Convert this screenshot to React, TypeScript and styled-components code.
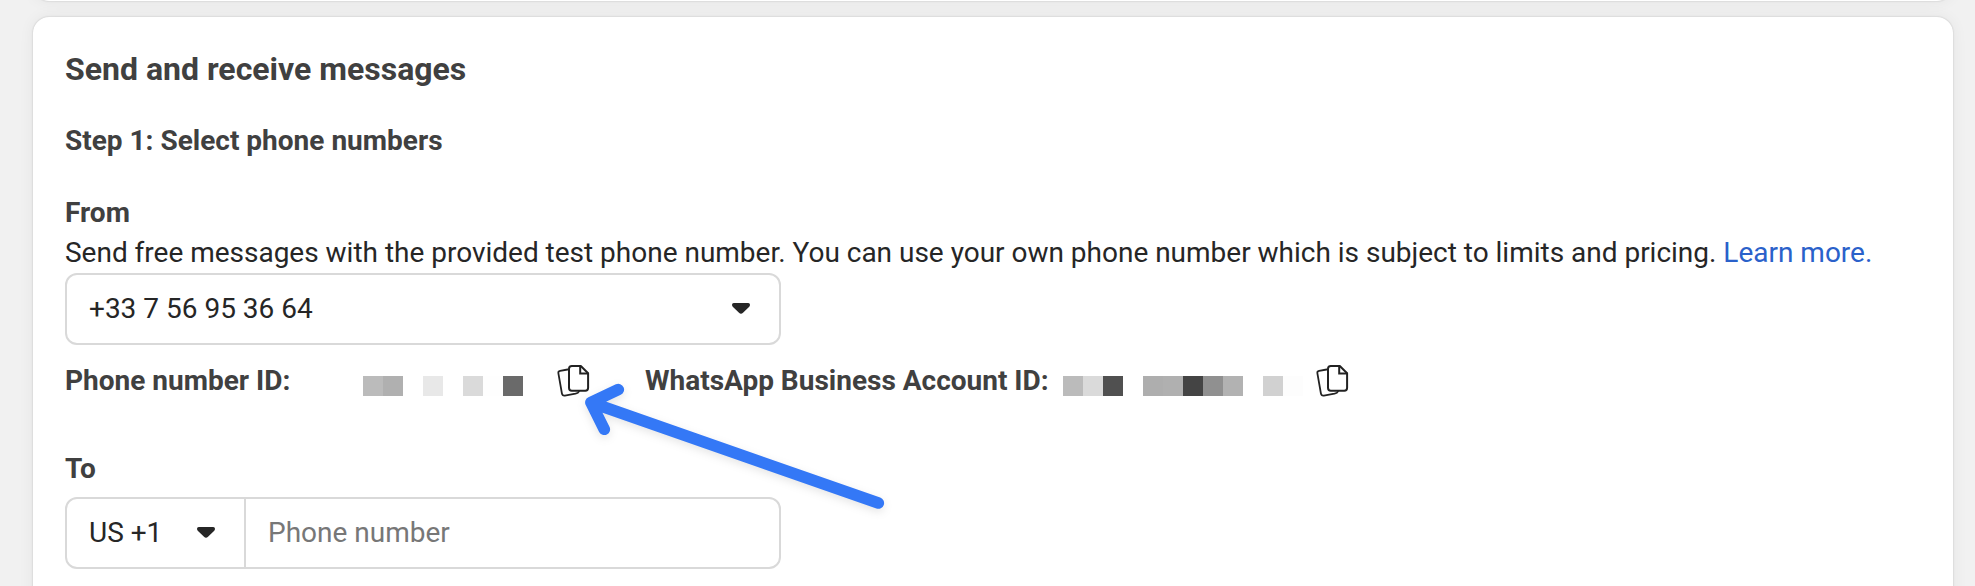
import React from "react";
import styled, { createGlobalStyle } from "styled-components";

const GlobalStyle = createGlobalStyle`
  * { box-sizing: border-box; }
  html, body { margin: 0; padding: 0; background: #f1f1f1; }
  body { font-family: Roboto, "Liberation Sans", sans-serif; overflow: hidden; }
`;

const Page = styled.main`
  display: flex;
  flex-direction: column;
  gap: 16px;
  width: 1975px;
  height: 586px;
  padding: 0 22px 0 33px;
  overflow: hidden;
  position: relative;
`;

const Card = styled.section`
  flex: none;
  background: #fff;
  border-radius: 16px;
  box-shadow: 0 0 2px rgba(0, 0, 0, 0.2), 0 0 16px rgba(0, 0, 0, 0.06);
`;

const PreviousCard = styled(Card)`
  height: 40px;
  margin-top: -39px;
`;

const MessagesCard = styled(Card)`
  display: flex;
  flex-direction: column;
  align-items: flex-start;
  height: 640px;
  padding: 32px;
`;

const Title = styled.h2`
  margin: 0 0 32px;
  font-size: 32px;
  line-height: 40px;
  font-weight: 700;
  color: #404040;
  white-space: nowrap;
`;

const Label = styled.h3<{ $after?: number }>`
  margin: 0 0 ${(p) => p.$after ?? 0}px;
  font-size: 28px;
  line-height: 40px;
  font-weight: 700;
  color: #404040;
  white-space: nowrap;
`;

const Description = styled.p`
  margin: 0;
  font-size: 28px;
  line-height: 40px;
  letter-spacing: -0.01px;
  color: #262626;
  white-space: nowrap;
`;

const Link = styled.a`
  color: #2a61ca;
  text-decoration: none;
`;

const Field = styled.div`
  display: flex;
  width: 716px;
  height: 72px;
  border: 2px solid #d9d9d9;
  border-radius: 12px;
  background: #fff;
  font-size: 28px;
  line-height: 40px;
  color: #262626;
`;

const Select = styled.div<{ $width?: number }>`
  display: flex;
  align-items: center;
  justify-content: space-between;
  width: ${(p) => (p.$width ? `${p.$width}px` : "100%")};
  padding: 0 29px 0 22px;
`;

const PhoneInput = styled.input`
  flex: 1;
  min-width: 0;
  padding: 0 22px;
  border: 0;
  border-left: 2px solid #d9d9d9;
  background: transparent;
  font: inherit;
  outline: none;
  &::placeholder { color: #777; opacity: 1; }
`;

const IdRow = styled.div`
  display: flex;
  align-items: flex-start;
  height: 40px;
  margin: 16px 0 48px;
`;

const IdItem = styled.div<{ $width: number }>`
  display: flex;
  justify-content: space-between;
  width: ${(p) => p.$width}px;
`;

const IdValue = styled.div`
  display: flex;
`;

const Mosaic = styled.div<{ $gap: number }>`
  display: flex;
  margin: 15px ${(p) => p.$gap}px 0 0;
`;

const Tile = styled.span<{ $color: string }>`
  width: 20px;
  height: 20px;
  background: ${(p) => p.$color};
`;

const CopyButton = styled.button`
  width: 34px;
  height: 34px;
  margin-top: 3px;
  padding: 0;
  border: 0;
  background: none;
  svg { display: block; }
`;

const Spacer = styled.div`
  width: 54px;
`;

const Pointer = styled.svg`
  position: absolute;
  left: 570px;
  top: 370px;
  filter: drop-shadow(0 3px 4px rgba(0, 0, 0, 0.1));
`;

const Caret = () => (
  <svg width="18" height="12" viewBox="0 0 18 12">
    <path d="M1.8 0H16.2Q18 0 18 1.8Q18 3 17 4L11 9.8Q9 11.8 7 9.8L1 4Q0 3 0 1.8Q0 0 1.8 0Z" fill="#262626" />
  </svg>
);

const Copy = () => (
  <CopyButton aria-label="Copy">
    <svg width="34" height="34" viewBox="0 0 34 34" fill="none" stroke="#222" strokeWidth="2" strokeLinejoin="round" strokeLinecap="round">
      <path d="M10.6 5.5L3.1 6.8Q1 7.2 1.4 9.3L4.9 29.4Q5.4 32 7.9 31.6L18.5 29.7Q21.3 29.1 22 27.5" strokeWidth="1.8" />
      <path d="M14.5 2H23.8L31.1 9.2V23.8Q31.1 26.7 28.3 26.7H14.8Q12 26.7 12 23.8V4.8Q12 2 14.8 2Z" />
      <path d="M23.2 2.4V9.6H30.8" strokeLinejoin="miter" />
    </svg>
  </CopyButton>
);

const phoneTiles = ["#bbb", "#b0b0b0", "#fff", "#e8e8e8", "#fff", "#dadada", "#fefefe", "#6a6a6a"];
const accountTiles = ["#bbb", "#dadada", "#505050", "#fff", "#aeaeae", "#b0b0b0", "#444", "#909090", "#b2b2b2", "#fff", "#d1d1d1", "#fdfdfd"];

const Redacted = ({ tiles, gap }: { tiles: string[]; gap: number }) => (
  <Mosaic $gap={gap}>
    {tiles.map((color, i) => (
      <Tile key={i} $color={color} />
    ))}
  </Mosaic>
);

export default function App() {
  return (
    <>
      <GlobalStyle />
      <Page>
        <PreviousCard />
        <MessagesCard>
          <Title>Send and receive messages</Title>
          <Label $after={32}>Step 1: Select phone numbers</Label>
          <Label>From</Label>
          <Description>
            Send free messages with the provided test phone number. You can use your own phone number which is subject to limits and pricing. <Link>Learn more.</Link>
          </Description>
          <Field>
            <Select>
              <span>+33 7 56 95 36 64</span>
              <Caret />
            </Select>
          </Field>
          <IdRow>
            <IdItem $width={526}>
              <Label>Phone number ID:</Label>
              <IdValue>
                <Redacted tiles={phoneTiles} gap={34} />
                <Copy />
              </IdValue>
            </IdItem>
            <Spacer />
            <IdItem $width={705}>
              <Label>WhatsApp Business Account ID:</Label>
              <IdValue>
                <Redacted tiles={accountTiles} gap={13} />
                <Copy />
              </IdValue>
            </IdItem>
          </IdRow>
          <Label $after={8}>To</Label>
          <Field>
            <Select $width={177}>
              <span>US +1</span>
              <Caret />
            </Select>
            <PhoneInput placeholder="Phone number" />
          </Field>
        </MessagesCard>
        <Pointer width="330" height="160" fill="none" stroke="#3478f6" strokeWidth="11.6" strokeLinecap="round" strokeLinejoin="round">
          <path d="M20.9 32.5L308.3 133M48.3 19.6L20.9 32.5L34.3 59.3" />
        </Pointer>
      </Page>
    </>
  );
}
